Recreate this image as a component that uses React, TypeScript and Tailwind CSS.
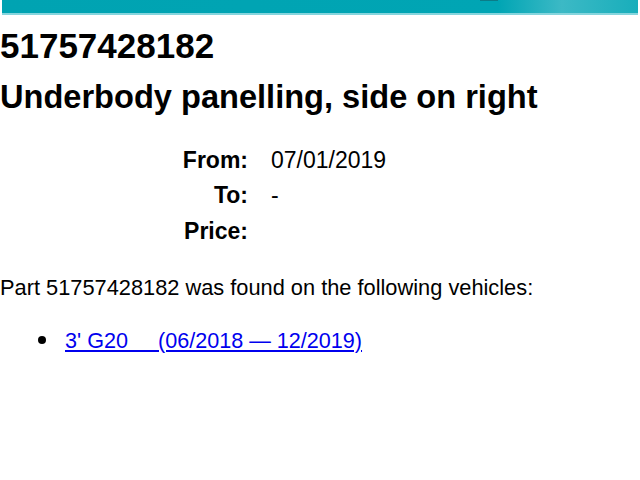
import React from "react";

export default function App() {
  return (
    <div className="w-[640px] h-[480px] bg-white overflow-hidden" style={{ fontFamily: '"Liberation Sans", Arial, sans-serif' }}>
      <div className="relative ml-[2px] mr-[2px] h-[15px] border-b-[2px] border-[#86d5dd] bg-[linear-gradient(90deg,#00a3b2_0%,#00a5b4_78%,#3cb9c5_88%,#18aebb_100%)]">
        <div className="absolute left-[478px] top-0 w-[18px] h-[1px] bg-[#0b7c88]" />
      </div>
      <h1 className="text-[35px] font-bold text-black leading-[40px] mt-[11px]">51757428182</h1>
      <h2 className="text-[32.6px] font-bold text-black leading-[40px] mt-[11px]">Underbody panelling, side on right</h2>
      <div className="mt-[25.5px] grid grid-cols-[248px_auto] gap-x-[23px] text-[23px] leading-[35.5px] text-black">
        <div className="text-right font-bold">From:</div>
        <div>07/01/2019</div>
        <div className="text-right font-bold">To:</div>
        <div>-</div>
        <div className="text-right font-bold">Price:</div>
        <div></div>
      </div>
      <p className="mt-[25.5px] text-[21.8px] leading-[25px] text-black">Part 51757428182 was found on the following vehicles:</p>
      <ul className="mt-[28px] ml-[38px] text-[21.6px] leading-[25px]">
        <li className="flex items-center gap-[19px]">
          <span className="w-[8px] h-[8px] rounded-full bg-black inline-block" />
          <a href="#" className="text-[#0000ee] underline">3' G20&nbsp;&nbsp;&nbsp;&nbsp;&nbsp;(06/2018 — 12/2019)</a>
        </li>
      </ul>
    </div>
  );
}
